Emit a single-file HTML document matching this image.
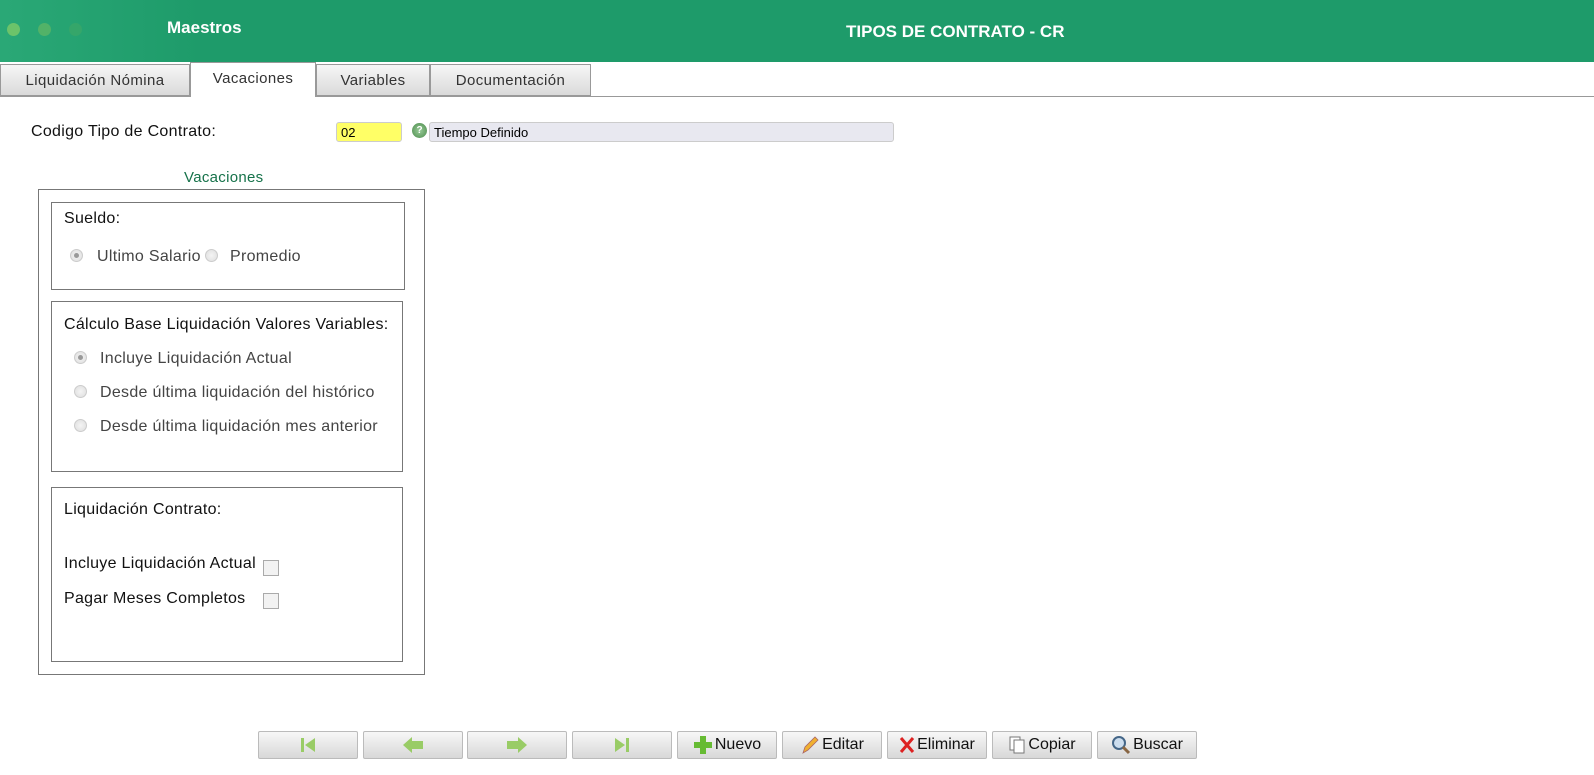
<!DOCTYPE html><html><head><style>
body{margin:0;width:1594px;height:775px;position:relative;font-family:"Liberation Sans",sans-serif;background:#fff;overflow:hidden}
.a{position:absolute;white-space:nowrap}
.hdr{left:0;top:0;width:1594px;height:62px;background:linear-gradient(90deg,#2aa876 0,#1e9b6a 200px,#1e9b6a)}
.dot{width:13px;height:13px;border-radius:50%;top:23px}
.tab{top:64px;height:32px;border:1px solid #999;background:linear-gradient(#f6f6f6,#dadada);font-size:15px;letter-spacing:.4px;color:#333;text-align:center;line-height:32px;box-sizing:border-box}
.box{border:1px solid #777;box-sizing:border-box}
.t{font-size:16px;letter-spacing:.3px;color:#111}
.g{font-size:16px;letter-spacing:.3px;color:#444}
.rad{width:13px;height:13px;border-radius:50%;border:1px solid #ccc;background:radial-gradient(#f4f4f4,#ddd);box-sizing:border-box}
.rad.on::after{content:"";position:absolute;left:3px;top:3px;width:5px;height:5px;border-radius:50%;background:#999}
.chk{width:16px;height:16px;border:1px solid #aaa;background:#f2f2f2;box-sizing:border-box}
.btn{top:731px;width:100px;height:28px;border:1px solid #bbb;border-radius:2px;background:linear-gradient(#f7f7f7,#d8d8d8);box-sizing:border-box;font-size:16px;color:#111;line-height:28px;display:flex;align-items:center;justify-content:center;gap:2px}
</style></head><body>
<div class="a hdr"></div>
<div class="a dot" style="left:7px;background:#6cc36a"></div>
<div class="a dot" style="left:38px;background:#52b268"></div>
<div class="a dot" style="left:69px;background:#35a66a"></div>
<div class="a" style="left:167px;top:18px;color:#fff;font-weight:bold;font-size:17px">Maestros</div>
<div class="a" style="left:846px;top:22px;color:#fff;font-weight:bold;font-size:17px">TIPOS DE CONTRATO - CR</div>
<div class="a" style="left:0;top:96px;width:1594px;height:1px;background:#999"></div>
<div class="a tab" style="left:0;width:190px">Liquidación Nómina</div>
<div class="a tab" style="left:190px;width:126px;top:62px;height:35px;background:#fff;border-bottom:none">Vacaciones</div>
<div class="a tab" style="left:316px;width:114px">Variables</div>
<div class="a tab" style="left:430px;width:161px">Documentación</div>
<div class="a t" style="left:31px;top:123px">Codigo Tipo de Contrato:</div>
<div class="a" style="left:336px;top:122px;width:66px;height:20px;background:#ffff66;border:1px solid #ccc;border-radius:3px;box-sizing:border-box;font-size:13px;padding:2px 0 0 4px">02</div>
<div class="a" style="left:412px;top:123px;width:15px;height:15px;border-radius:50%;background:radial-gradient(#9c9,#4a8a4a);color:#fff;font-size:10px;text-align:center;line-height:15px;font-weight:bold">?</div>
<div class="a" style="left:429px;top:122px;width:465px;height:20px;background:#e8e8f0;border:1px solid #ccc;border-radius:3px;box-sizing:border-box;font-size:13px;padding:2px 0 0 4px">Tiempo Definido</div>
<div class="a" style="left:184px;top:169px;color:#16724a;font-size:15px;letter-spacing:.3px">Vacaciones</div>
<div class="a box" style="left:38px;top:189px;width:387px;height:486px"></div>
<div class="a box" style="left:51px;top:202px;width:354px;height:88px"></div>
<div class="a t" style="left:64px;top:210px">Sueldo:</div>
<div class="a rad on" style="left:70px;top:249px"></div><div class="a g" style="left:97px;top:248px">Ultimo Salario</div>
<div class="a rad" style="left:205px;top:249px"></div><div class="a g" style="left:230px;top:248px">Promedio</div>
<div class="a box" style="left:51px;top:301px;width:352px;height:171px"></div>
<div class="a t" style="left:64px;top:316px">Cálculo Base Liquidación Valores Variables:</div>
<div class="a rad on" style="left:74px;top:351px"></div><div class="a g" style="left:100px;top:350px">Incluye Liquidación Actual</div>
<div class="a rad" style="left:74px;top:385px"></div><div class="a g" style="left:100px;top:384px">Desde última liquidación del histórico</div>
<div class="a rad" style="left:74px;top:419px"></div><div class="a g" style="left:100px;top:418px">Desde última liquidación mes anterior</div>
<div class="a box" style="left:51px;top:487px;width:352px;height:175px"></div>
<div class="a t" style="left:64px;top:501px">Liquidación Contrato:</div>
<div class="a t" style="left:64px;top:555px">Incluye Liquidación Actual</div><div class="a chk" style="left:263px;top:560px"></div>
<div class="a t" style="left:64px;top:590px">Pagar Meses Completos</div><div class="a chk" style="left:263px;top:593px"></div>
<div class="a btn" style="left:258px"><svg width="20" height="20"><rect x="3" y="3" width="3" height="14" fill="#9c6"/><path d="M17 3 L7 10 L17 17Z" fill="#9c6"/></svg></div>
<div class="a btn" style="left:363px"><svg width="24" height="20"><path d="M2 10 L11 2 V6 H22 V14 H11 V18Z" fill="#9c6"/></svg></div>
<div class="a btn" style="left:467px"><svg width="24" height="20"><path d="M22 10 L13 2 V6 H2 V14 H13 V18Z" fill="#9c6"/></svg></div>
<div class="a btn" style="left:572px"><svg width="20" height="20"><rect x="14" y="3" width="3" height="14" fill="#9c6"/><path d="M3 3 L13 10 L3 17Z" fill="#9c6"/></svg></div>
<div class="a btn" style="left:677px"><svg width="20" height="20"><path d="M7 1h6v6h6v6h-6v6H7v-6H1V7h6z" fill="#6b3" /></svg>Nuevo</div>
<div class="a btn" style="left:782px"><svg width="20" height="20"><path d="M3 18 L5 12 L15 2 L18 5 L8 15Z" fill="#f0b030" stroke="#a66" stroke-width=".8"/></svg>Editar</div>
<div class="a btn" style="left:887px"><svg width="16" height="20"><path d="M2 3 L14 17 M14 3 L2 17" stroke="#d22" stroke-width="3"/></svg>Eliminar</div>
<div class="a btn" style="left:992px"><svg width="18" height="20"><rect x="2" y="2" width="10" height="13" fill="#fff" stroke="#777"/><rect x="6" y="5" width="10" height="13" fill="#fff" stroke="#777"/></svg>Copiar</div>
<div class="a btn" style="left:1097px"><svg width="20" height="20"><circle cx="8" cy="8" r="6" fill="#cde" stroke="#468" stroke-width="2"/><path d="M12 12 L18 18" stroke="#864" stroke-width="3"/></svg>Buscar</div>
</body></html>
